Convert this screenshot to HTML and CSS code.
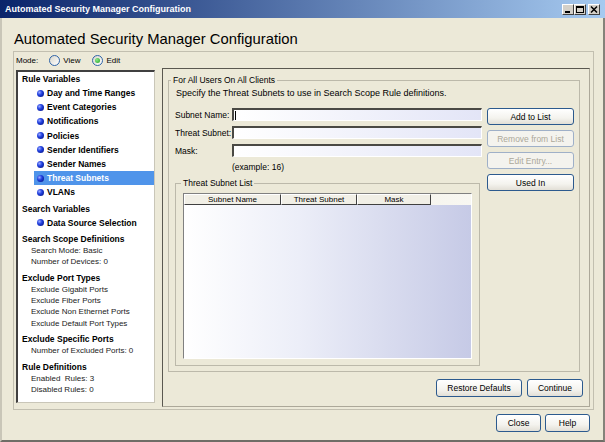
FILE: index.html
```html
<!DOCTYPE html>
<html>
<head>
<meta charset="utf-8">
<title>Automated Security Manager Configuration</title>
<link rel="stylesheet" href="styles.css">
</head>
<body>
<div class="window">
  <div class="titlebar">
    <span class="title">Automated Security Manager Configuration</span>
    <div class="caption-btns">
      <span class="cbtn"><svg viewBox="0 0 10 9" width="10" height="9"><rect x="2" y="6" width="5" height="2" fill="#000"/></svg></span>
      <span class="cbtn"><svg viewBox="0 0 10 9" width="10" height="9"><rect x="1.5" y="1.5" width="7" height="6" fill="none" stroke="#000"/><rect x="1" y="1" width="8" height="2" fill="#000"/></svg></span>
      <span class="cbtn close"><svg viewBox="0 0 10 9" width="10" height="9"><path d="M2 1.5 L8 7.5 M8 1.5 L2 7.5" stroke="#000" stroke-width="1.5"/></svg></span>
    </div>
  </div>
  <div class="client">
    <h1 class="heading">Automated Security Manager Configuration</h1>
    <div class="frame">
      <div class="mode">
        <span class="mode-lbl">Mode:</span>
        <span class="radio"></span><span class="opt">View</span>
        <span class="radio on"></span><span class="opt">Edit</span>
      </div>
      <div class="split">
        <div class="nav">
          <div class="nav-h">Rule Variables</div>
          <ul class="bullets">
            <li><span class="dot"></span>Day and Time Ranges</li>
            <li><span class="dot"></span>Event Categories</li>
            <li><span class="dot"></span>Notifications</li>
            <li><span class="dot"></span>Policies</li>
            <li><span class="dot"></span>Sender Identifiers</li>
            <li><span class="dot"></span>Sender Names</li>
            <li class="sel"><span class="dot"></span>Threat Subnets</li>
            <li><span class="dot"></span>VLANs</li>
          </ul>
          <div class="nav-h sec">Search Variables</div>
          <ul class="bullets">
            <li><span class="dot"></span>Data Source Selection</li>
          </ul>
          <div class="nav-h sec">Search Scope Definitions</div>
          <ul class="subs">
            <li>Search Mode: Basic</li>
            <li>Number of Devices: 0</li>
          </ul>
          <div class="nav-h sec2">Exclude Port Types</div>
          <ul class="subs">
            <li>Exclude Gigabit Ports</li>
            <li>Exclude Fiber Ports</li>
            <li>Exclude Non Ethernet Ports</li>
            <li>Exclude Default Port Types</li>
          </ul>
          <div class="nav-h sec2">Exclude Specific Ports</div>
          <ul class="subs">
            <li>Number of Excluded Ports: 0</li>
          </ul>
          <div class="nav-h sec2">Rule Definitions</div>
          <ul class="subs">
            <li>Enabled&nbsp; Rules: 3</li>
            <li>Disabled Rules: 0</li>
          </ul>
        </div>
        <div class="panel">
          <fieldset class="group main">
            <legend>For All Users On All Clients</legend>
            <div class="specify">Specify the Threat Subnets to use in Search Scope Rule definitions.</div>
            <div class="cols">
              <div class="fields">
                <div class="row"><label>Subnet Name:</label><div class="input focus"><span class="caret"></span></div></div>
                <div class="row"><label>Threat Subnet:</label><div class="input"></div></div>
                <div class="row"><label>Mask:</label><div class="input"></div></div>
                <div class="example">(example: 16)</div>
                <fieldset class="group threat">
                  <legend>Threat Subnet List</legend>
                  <div class="table">
                    <div class="thead">
                      <div class="th c1">Subnet Name</div>
                      <div class="th c2">Threat Subnet</div>
                      <div class="th c3">Mask</div>
                    </div>
                    <div class="tbody"></div>
                  </div>
                </fieldset>
              </div>
              <div class="side-btns">
                <button class="btn">Add to List</button>
                <button class="btn" disabled>Remove from List</button>
                <button class="btn" disabled>Edit Entry...</button>
                <button class="btn">Used In</button>
              </div>
            </div>
          </fieldset>
          <div class="panel-actions">
            <button class="btn big restore">Restore Defaults</button>
            <button class="btn big cont">Continue</button>
          </div>
        </div>
      </div>
    </div>
    <div class="footer">
      <button class="btn big fbtn">Close</button>
      <button class="btn big fbtn">Help</button>
    </div>
  </div>
</div>
</body>
</html>
```
FILE: styles.css
```css
html, body {
  margin: 0;
  padding: 0;
}
body {
  width: 605px;
  height: 442px;
  overflow: hidden;
  font-family: "Liberation Sans", Arial, sans-serif;
  background: #ece9d8;
  color: #000;
}
.window {
  width: 605px;
  height: 442px;
  display: flex;
  flex-direction: column;
}
.titlebar {
  height: 18px;
  flex: none;
  display: flex;
  align-items: center;
  justify-content: space-between;
  padding: 0 5px 0 5px;
  background: linear-gradient(to right, #0a246a, #a6caf0);
}
.title {
  color: #fff;
  font-weight: bold;
  font-size: 9px;
}
.caption-btns {
  display: flex;
  align-items: center;
}
.cbtn {
  box-sizing: border-box;
  width: 12px;
  height: 11px;
  background: #d4d0c8;
  border: 1px solid;
  border-color: #fff #404040 #404040 #fff;
  display: flex;
  align-items: center;
  justify-content: center;
}
.cbtn svg { display: block; }
.cbtn.close { margin-left: 2px; }
.client {
  flex: 1;
  box-sizing: border-box;
  border-style: solid;
  border-width: 0 2px 2px 2px;
  border-color: #b0aea2 #85837a #6f6d66 #c9c6b8;
  display: flex;
  flex-direction: column;
}
.heading {
  margin: 12px 0 0 12px;
  font-size: 14.8px;
  line-height: 18px;
  font-weight: normal;
}
.frame {
  box-sizing: border-box;
  margin: 3px 0 0 11px;
  width: 581px;
  height: 359px;
  border: 1px solid #c2bfb0;
  padding: 0 2px;
}
.mode {
  display: flex;
  align-items: center;
  height: 16px;
  font-size: 8px;
}
.mode-lbl { margin-right: 11px; }
.radio {
  box-sizing: border-box;
  width: 11px;
  height: 11px;
  border-radius: 50%;
  border: 1px solid #2f64a8;
  background: linear-gradient(135deg, #d8d6cc, #fff);
  display: inline-flex;
  align-items: center;
  justify-content: center;
  margin-right: 3px;
}
.radio.on::after {
  content: "";
  width: 5px;
  height: 5px;
  border-radius: 50%;
  background: radial-gradient(circle at 35% 35%, #8be88b, #21a121);
}
.opt { margin-right: 12px; }
.split {
  display: flex;
  align-items: flex-start;
}
.nav {
  box-sizing: border-box;
  width: 139px;
  height: 333px;
  margin-top: 2px;
  background: #fff;
  border-style: solid;
  border-width: 2px 1px 1px 2px;
  border-color: #404040 #c9c6b8 #c9c6b8 #404040;
  padding-top: 1px;
  overflow: hidden;
}
.nav-h {
  font-weight: bold;
  font-size: 8.5px;
  line-height: 12px;
  padding-left: 4px;
}
.sec { margin-top: 3px; }
.sec2 { margin-top: 4px; }
.bullets {
  list-style: none;
  margin: 1px 0 0;
  padding: 0;
}
.bullets li {
  display: flex;
  align-items: center;
  gap: 3px;
  height: 14.2px;
  margin-left: 16px;
  padding-left: 3px;
  font-weight: bold;
  font-size: 8.5px;
}
.bullets li.sel {
  background: #4f94ea;
  color: #fff;
}
.dot {
  flex: none;
  width: 7px;
  height: 7px;
  border-radius: 50%;
  background: radial-gradient(circle at 35% 35%, #9aa8ff 0, #2040e0 40%, #000a70 100%);
}
.subs {
  list-style: none;
  margin: 0;
  padding: 0 0 0 13px;
  font-size: 8px;
  line-height: 11.4px;
  color: #222;
}
.panel {
  box-sizing: border-box;
  width: 428px;
  height: 339px;
  margin-left: 7px;
  border: 1px solid;
  border-color: #5a5850 #aca899 #aca899 #5a5850;
  display: flex;
  flex-direction: column;
}
.group {
  margin: 0;
  min-width: 0;
  box-sizing: border-box;
  border: 1px solid #bcb9aa;
}
.group legend {
  font-size: 8.5px;
  line-height: 10px;
  padding: 0 2px;
}
.main {
  margin: 6px 0 0 5px;
  width: 412px;
  padding: 3px 5px 5px 6px;
}
.main > legend { margin-left: -4px; }
.specify {
  font-size: 9px;
  line-height: 11px;
  margin: 0 0 9px 1px;
}
.cols {
  display: flex;
  gap: 5px;
}
.fields { width: 307px; }
.row {
  display: flex;
  align-items: center;
  height: 13px;
  margin-bottom: 5px;
}
.row label {
  width: 57px;
  font-size: 8.5px;
}
.input {
  box-sizing: border-box;
  width: 250px;
  height: 13px;
  border-style: solid;
  border-width: 2px 1px 1px 2px;
  border-color: #4a4944 #fff #fff #4a4944;
  background: linear-gradient(to right, #fff, #e3e5f7);
  display: flex;
  align-items: center;
}
.caret {
  width: 1px;
  height: 9px;
  margin-left: 1px;
  background: #000;
}
.example {
  margin-left: 57px;
  font-size: 8.5px;
  line-height: 11px;
}
.threat {
  margin-top: 5px;
  width: 305px;
  height: 188px;
  padding: 5px 5px 5px 7px;
}
.threat > legend { margin-left: -2px; }
.table {
  box-sizing: border-box;
  width: 289px;
  height: 166px;
  border: 1px solid;
  border-color: #808080 #fff #fff #808080;
  display: flex;
  flex-direction: column;
}
.thead {
  flex: none;
  display: flex;
  height: 11px;
  background: linear-gradient(to right, #ece9d8, #f8f7f2);
}
.th {
  box-sizing: border-box;
  height: 11px;
  border: 1px solid;
  border-color: #fff #404040 #404040 #fff;
  background: #f1efe6;
  font-size: 8px;
  line-height: 9px;
  text-align: center;
}
.c1 { width: 97px; }
.c2 { width: 76px; }
.c3 { width: 74px; }
.tbody {
  flex: 1;
  background: linear-gradient(to right, #fff 0%, #eceef8 40%, #c6cae6 100%);
}
.side-btns {
  width: 88px;
  display: flex;
  flex-direction: column;
  gap: 5px;
}
.btn {
  box-sizing: border-box;
  height: 17px;
  border: 1px solid #2c5a8e;
  border-radius: 3px;
  background: linear-gradient(#fff, #f4f3ee 60%, #e2dfd6);
  font-family: inherit;
  font-size: 8.5px;
  color: #000;
  padding: 0;
}
.btn:disabled {
  color: #aca899;
  border-color: #9fb0c8;
  background: #f4f3ee;
}
.big { height: 18px; }
.panel-actions {
  display: flex;
  justify-content: flex-end;
  gap: 5px;
  margin-top: 7px;
  padding-right: 6px;
}
.restore { width: 86px; }
.cont { width: 56px; }
.footer {
  display: flex;
  justify-content: flex-end;
  gap: 4px;
  margin-top: 4px;
  padding-right: 13px;
}
.fbtn { width: 45px; }
```
